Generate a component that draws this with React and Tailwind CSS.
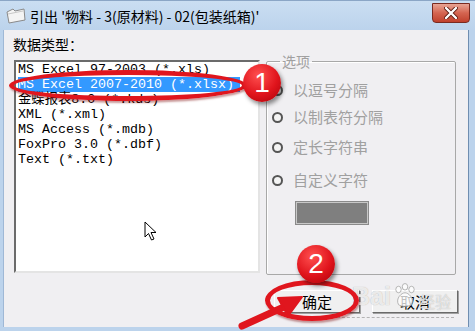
import React from 'react'

const MONO = { fontFamily: '"Liberation Mono", "Noto Sans CJK SC", monospace' }
const CJK = { fontFamily: '"Noto Sans CJK SC", "Noto Sans", sans-serif' }

const ITEMS = [
  'MS Excel 97-2003 (*.xls)',
  'MS Excel 2007-2010 (*.xlsx)',
  '金蝶报表8.0 (*.kds)',
  'XML (*.xml)',
  'MS Access (*.mdb)',
  'FoxPro 3.0 (*.dbf)',
  'Text (*.txt)',
]

const OPTIONS = [
  { label: '以逗号分隔', mt: 'mt-[11px]' },
  { label: '以制表符分隔', mt: 'mt-[7px]' },
  { label: '定长字符串', mt: 'mt-[10px]' },
  { label: '自定义字符', mt: 'mt-[13px]' },
]

function Radio({ label, mt }) {
  return (
    <div className={`flex items-center h-[20px] ${mt}`}>
      <span className="w-[11px] h-[11px] rounded-full border-2 border-[#555] bg-[#f4f4f4] shrink-0" />
      <span className="ml-[10px] text-[15px] leading-[20px] text-[#a0a0a0]">{label}</span>
    </div>
  )
}

function Button({ children }) {
  return (
    <button
      type="button"
      className="w-[86px] h-[23px] text-[15px] leading-[19px] text-black bg-[#f0f0f0] border border-t-white border-l-white border-r-[#6a6a6a] border-b-[#6a6a6a] shadow-[1px_1px_0_#a0a0a0]"
    >
      {children}
    </button>
  )
}

function Badge({ n, className }) {
  return (
    <div
      className={`absolute w-[38px] h-[38px] rounded-full flex items-center justify-center text-white text-[28px] leading-none bg-[radial-gradient(circle_at_40%_30%,#ff5050,#e0141c_55%,#a80008)] shadow-[2px_3px_4px_rgba(0,0,0,0.45)] ${className}`}
      style={{ fontFamily: '"Liberation Sans", Arial, sans-serif' }}
    >
      {n}
    </div>
  )
}

export default function App() {
  return (
    <div className="relative w-[475px] h-[331px] overflow-hidden flex flex-col bg-[#bcd3ec]" style={CJK}>
      {/* title bar */}
      <div className="h-[30px] shrink-0 flex items-center bg-gradient-to-b from-[#cadef2] to-[#bcd3ec] border-t border-[#8ba6c6] pl-[6px] pr-[5px]">
        <svg width="20" height="16" viewBox="0 0 20 16" className="shrink-0">
          <path d="M1 4 L7 1 L9 3 L18 1 L19 12 L3 15 Z" fill="#f4f4f4" stroke="#8a8a8a" strokeWidth="1" />
          <path d="M2 6 L17 3" stroke="#c8c8c8" strokeWidth="1" />
        </svg>
        <span className="ml-[4px] text-[14px] leading-[18px] text-black">引出 '物料 - 3(原材料) - 02(包装纸箱)'</span>
        <div className="ml-auto w-[38px] h-[20px] -mt-[5px] rounded-b-[4px] border border-[#7a2a20] bg-gradient-to-b from-[#e8a494] via-[#d46450] to-[#c0402c] flex items-center justify-center">
          <svg width="14" height="12" viewBox="0 0 14 12">
            <path d="M2 1 L12 11 M12 1 L2 11" stroke="#5a1a10" strokeWidth="4" strokeLinecap="round" />
            <path d="M2 1 L12 11 M12 1 L2 11" stroke="#ffffff" strokeWidth="2.4" strokeLinecap="round" />
          </svg>
        </div>
      </div>

      {/* client area */}
      <div className="flex-1 flex flex-col mx-[4px] mr-[7px] mb-[4px] bg-[#f0eff2] pl-[9px] pt-[5px] shadow-[1px_0_0_#6f8db0,-1px_0_0_#9fb8d6]">
        <div className="h-[18px] text-[14px] leading-[18px] text-black">数据类型：</div>

        <div className="flex">
          {/* list box */}
          <div className="mt-[7px] ml-[1px] w-[246px] h-[213px] bg-white border-2 border-t-[#6b6b6b] border-l-[#6b6b6b] border-r-[#e4e4e4] border-b-[#e4e4e4] pl-[2px] text-[13.33px] leading-[15px] text-black overflow-hidden" style={MONO}>
            {ITEMS.map((t, i) => (
              <div key={t} className="h-[15px] whitespace-pre">
                <span className={i === 1 ? 'bg-[#3399ff] text-white pr-[6px]' : ''}>{t}</span>
              </div>
            ))}
          </div>

          {/* options */}
          <fieldset className="ml-[6px] w-[190px] h-[222px] border border-[#a8a8a8] shadow-[inset_1px_1px_0_#fff] pl-[5px] rounded-[2px]">
            <legend className="ml-[8px] px-[2px] text-[14px] leading-[16px] text-[#a0a0a0]">选项</legend>
            {OPTIONS.map(o => <Radio key={o.label} {...o} />)}
            <div className="mt-[12px] ml-[24px] w-[72px] h-[22px] bg-[#7f7f7f] border border-[#c8c8c8] outline outline-1 outline-[#8a8a8a]" />
          </fieldset>
        </div>

        <div className="mt-[15px] pr-[10px] flex justify-end gap-[12px]">
          <Button>确定</Button>
          <Button>取消</Button>
        </div>
      </div>

      {/* mouse cursor */}
      <svg className="absolute left-[144px] top-[221px]" width="14" height="21" viewBox="0 0 14 21">
        <path d="M1 1 L1 16 L4.5 12.5 L7.5 19 L10 18 L7 11.5 L12 11.5 Z" fill="#fff" stroke="#000" strokeWidth="1" strokeLinejoin="round" />
      </svg>

      {/* baidu watermark */}
      <div className="absolute left-[352px] top-[283px] flex items-end text-[25px] leading-none font-bold text-white/75 [text-shadow:0_0_1px_#aaa]" style={{ fontFamily: '"Liberation Sans", Arial, sans-serif' }}>
        <span>Bai</span>
        <svg width="26" height="26" viewBox="0 0 24 24" className="mx-[1px]">
          <g fill="rgba(255,255,255,0.75)" stroke="#aaa" strokeWidth="0.8">
            <ellipse cx="6" cy="6" rx="2.5" ry="3" />
            <ellipse cx="12" cy="3.5" rx="2.5" ry="3" />
            <ellipse cx="18" cy="6" rx="2.5" ry="3" />
            <path d="M6 20 C3 14 9 9 12 9 C15 9 21 14 18 20 C15 22 9 22 6 20 Z" />
          </g>
        </svg>
        <span className="text-[16px] font-normal text-white/60" style={CJK}>经验</span>
      </div>
      <div className="absolute left-[332px] top-[317px] w-[122px] border-t border-dashed border-[#9a9a9a]/70" />

      {/* annotations */}
      <div className="absolute left-[9px] top-[70px] w-[238px] h-[31px] rounded-[50%] border-[5px] border-[#e0161e] shadow-[1px_2px_2px_rgba(120,0,0,0.4)]" />
      <Badge n="1" className="left-[243px] top-[64px]" />

      <div className="absolute left-[265px] top-[280px] w-[94px] h-[41px] rounded-[50%] border-[5px] border-[#e0161e] shadow-[1px_2px_2px_rgba(120,0,0,0.4)]" />
      <Badge n="2" className="left-[297px] top-[245px]" />

      <svg className="absolute left-[236px] top-[290px]" width="75" height="41" viewBox="0 0 75 41">
        <path d="M6 36 L50 16" stroke="#e0161e" strokeWidth="7" strokeLinecap="round" />
        <path d="M66 7 L42 8 L52 26 Z" fill="#e0161e" stroke="#e0161e" strokeWidth="2" strokeLinejoin="round" />
      </svg>
    </div>
  )
}
